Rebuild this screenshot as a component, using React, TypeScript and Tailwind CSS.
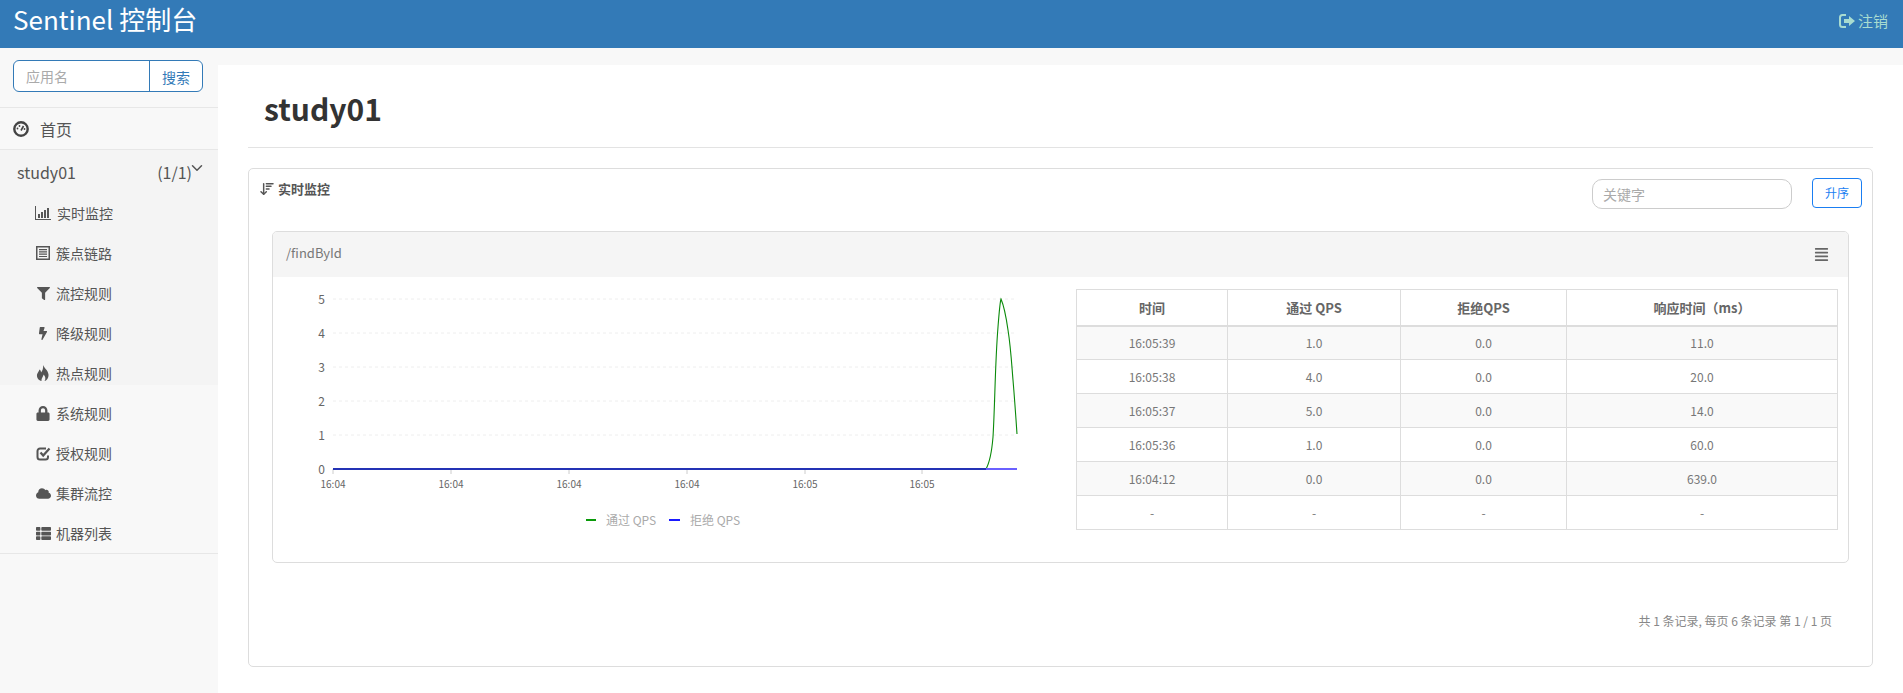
import { ArrowDownWideNarrow, ChevronDown } from 'lucide-react';
import { FaAlignJustify, FaBolt, FaCloud, FaFilter, FaLock, FaThList } from 'react-icons/fa';

const font = { fontFamily: '"Noto Sans CJK SC", "Noto Sans", sans-serif' };

const StatsIcon = () => (
  <svg viewBox="0 0 16 14" className="w-4 h-[14px]" fill="currentColor">
    <path d="M0 0h1v13h15v1H0z" />
    <path d="M3 8h2v4H3zM6 6h2v6H6zM9 4h2v8H9zM12 2h2v10h-2z" />
  </svg>
);

const ListAltIcon = () => (
  <svg viewBox="0 0 14 14" className="w-[14px] h-[14px]" fill="currentColor">
    <path d="M0 0h14v14H0zM1.500 1.500v11h11v-11z" fillRule="evenodd" />
    <path d="M3 3h8v1.200H3zM3 5.300h8v1.200H3zM3 7.600h8v1.200H3zM3 9.900h8v1.200H3z" />
  </svg>
);

const FireIcon = () => (
  <svg viewBox="0 0 14 16" className="w-[14px] h-4" fill="currentColor">
    <path d="M7 0c1 3 5 5 5.500 9.500C12.800 13 10.500 16 8.500 16c1.500-2 1-4.500-1-6.500 0 2-2 3-2 6.500C3 15.500.5 13 1 9.500c.5-2 2-3 2.500-5 1 .5 1.500 1.500 1.500 3C6.500 6 7.500 3 7 0z" />
  </svg>
);

const CheckIcon = () => (
  <svg viewBox="0 0 15 15" className="w-[15px] h-[15px]" fill="none" stroke="currentColor">
    <path d="M12 9.500V11a2.500 2.500 0 0 1-2.500 2.500H4A2.500 2.500 0 0 1 1.500 11V5A2.500 2.500 0 0 1 4 2.500h6" strokeWidth="2" />
    <path d="M4.500 6.500 7.200 9.500 13.500 2.500" strokeWidth="2.200" />
  </svg>
);

const DashboardIcon = () => (
  <svg viewBox="0 0 16 16" className="w-4 h-4 text-[#444]">
    <circle cx="8" cy="8" r="6.700" fill="none" stroke="currentColor" strokeWidth="2.400" />
    <path d="M8 9.500 10.500 5" stroke="currentColor" strokeWidth="1.600" />
    <circle cx="4.500" cy="7.500" r="0.9" fill="currentColor" />
    <circle cx="6.500" cy="5" r="0.9" fill="currentColor" />
    <circle cx="11.500" cy="8" r="0.9" fill="currentColor" />
  </svg>
);

const LogoutIcon = () => (
  <svg viewBox="0 0 16 14" className="w-4 h-[14px]" fill="currentColor">
    <path d="M7 0H3.500A3.500 3.500 0 0 0 0 3.500v7A3.500 3.500 0 0 0 3.500 14H7v-2H3.500A1.500 1.500 0 0 1 2 10.500v-7A1.500 1.500 0 0 1 3.500 2H7z" />
    <path d="M5 5h5V2l6 5-6 5V9H5z" />
  </svg>
);

const menu = [
  { label: '实时监控', icon: <StatsIcon />, gap: 'gap-[6px]' },
  { label: '簇点链路', icon: <ListAltIcon />, gap: 'gap-[5px]' },
  { label: '流控规则', icon: <FaFilter className="w-[13px] h-[13px]" />, gap: 'gap-[5px]' },
  { label: '降级规则', icon: <FaBolt className="w-3 h-[13px]" />, gap: 'gap-[5px]' },
  { label: '热点规则', icon: <FireIcon />, gap: 'gap-[5px]' },
];

const menuTail = [
  { label: '系统规则', icon: <FaLock className="w-[14px] h-[15px]" />, gap: 'gap-[5px]' },
  { label: '授权规则', icon: <CheckIcon />, gap: 'gap-[5px]' },
  { label: '集群流控', icon: <FaCloud className="w-[15px] h-[15px]" />, gap: 'gap-[5px]' },
  { label: '机器列表', icon: <FaThList className="w-[15px] h-[15px]" />, gap: 'gap-[5px]' },
];

const rows = [
  ['16:05:39', '1.0', '0.0', '11.0'],
  ['16:05:38', '4.0', '0.0', '20.0'],
  ['16:05:37', '5.0', '0.0', '14.0'],
  ['16:05:36', '1.0', '0.0', '60.0'],
  ['16:04:12', '0.0', '0.0', '639.0'],
  ['-', '-', '-', '-'],
];

const colWidths = ['w-[151px]', 'w-[173px]', 'w-[166px]', 'w-[271px]'];
const ticks = [333, 451, 569, 687, 805, 922];
const tickLabels = ['16:04', '16:04', '16:04', '16:04', '16:05', '16:05'];

function MenuItem({ item }: { item: { label: string; icon: React.ReactNode; gap: string } }) {
  return (
    <li className={`h-10 pl-[35px] flex items-center text-sm text-[#555] ${item.gap}`}>
      <span className="w-4 flex justify-center shrink-0">{item.icon}</span>
      <span>{item.label}</span>
    </li>
  );
}

function Chart() {
  return (
    <svg viewBox="0 0 756 270" className="w-[756px] h-[270px] shrink-0">
      {[1, 2, 3, 4, 5].map((n) => (
        <line key={n} x1={49} x2={733} y1={185 - n * 34} y2={185 - n * 34} stroke="#eeeeee" strokeDasharray="3 3" />
      ))}
      {[0, 1, 2, 3, 4, 5].map((n) => (
        <text key={n} x={41} y={190 - n * 34} textAnchor="end" fontSize="12" fill="#666">{n}</text>
      ))}
      {ticks.map((x, i) => (
        <g key={i}>
          <line x1={x - 284} x2={x - 284} y1={185} y2={190} stroke="#ccc" />
          <text x={x - 284} y={204} textAnchor="middle" fontSize="10" fill="#666">{tickLabels[i]}</text>
        </g>
      ))}
      <path
        d="M702 185C706 178 708 165 709 153C711 120 711 80 714 43C715 30 716 18 717 15C720 22 722 32 724 46C727 65 728 85 729 96C731 120 732 135 733 150"
        fill="none"
        stroke="#0a8a0a"
        strokeWidth="1.100"
      />
      <line x1={49} x2={702} y1={185} y2={185} stroke="#2433b5" strokeWidth="2" />
      <line x1={702} x2={733} y1={185} y2={185} stroke="#6a60ff" strokeWidth="2" />
      <line x1={302} x2={312} y1={236} y2={236} stroke="#0a9a0a" strokeWidth="2" />
      <text x={322} y={241} fontSize="12" fill="#aaa">通过 QPS</text>
      <line x1={385} x2={396} y1={236} y2={236} stroke="#1a1aff" strokeWidth="2" />
      <text x={406} y={241} fontSize="12" fill="#aaa">拒绝 QPS</text>
    </svg>
  );
}

export default function App() {
  return (
    <div style={font} className="w-[1903px] h-[693px] overflow-hidden bg-white text-[#333] flex flex-col">
      {/* Header */}
      <header className="h-12 shrink-0 bg-[#337ab7] flex items-center justify-between pl-[13px] pr-[15px]">
        <h1 className="text-[26px] text-white leading-[38px] mb-[10px]">Sentinel 控制台</h1>
        <a className="flex items-center gap-[3px] text-[15px] text-[#a9dcd0] -mt-[6px]">
          <LogoutIcon />
          <span>注销</span>
        </a>
      </header>

      <div className="flex flex-1 min-h-0">
        {/* Sidebar */}
        <aside className="w-[218px] shrink-0 bg-[#f8f8f8]">
          <div className="h-[60px] pt-3 px-[13px] border-b border-[#e7e7e7]">
            <div className="flex h-[32px] w-[190px] border border-[#337ab7] rounded-md bg-white overflow-hidden text-sm">
              <div className="flex-1 pl-[12px] text-[#aaa] leading-[30px]">应用名</div>
              <div className="w-[53px] border-l border-[#337ab7] text-center text-[#337ab7] leading-[32px]">搜索</div>
            </div>
          </div>
          <div className="h-[42px] pl-[13px] flex items-center gap-[11px] text-base text-[#555] border-b border-[#e7e7e7]">
            <DashboardIcon />
            <span>首页</span>
          </div>
          <div className="bg-[#f4f4f4] h-[235px]">
            <div className="h-[43px] pl-[17px] pr-[14px] pt-[10px] flex items-start justify-between text-base text-[#555] relative">
              <span className="leading-6">study01</span>
              <span className="leading-6 pr-[12px]">(1/1)</span>
              <ChevronDown className="absolute right-[12px] top-[9px] w-[18px] h-[18px]" strokeWidth={2} />
            </div>
            <ul>
              {menu.map((item) => (
                <MenuItem key={item.label} item={item} />
              ))}
            </ul>
          </div>
          <ul className="border-b border-[#e7e7e7] pt-2">
            {menuTail.map((item) => (
              <MenuItem key={item.label} item={item} />
            ))}
          </ul>
        </aside>

        {/* Main */}
        <main className="flex-1 min-w-0 bg-[#f8f8f8] pt-[17px]">
          <div className="bg-white h-full px-[30px]">
            <div className="h-[83px] border-b border-[#e3e3e3] pl-[16px] pt-[18px]">
              <h2 className="text-[30px] font-bold leading-[50px] text-[#333]">study01</h2>
            </div>

            <section className="mt-5 h-[499px] border border-[#ddd] rounded-[5px] flex flex-col">
              <div className="h-[62px] flex items-start justify-between shrink-0 pl-[10px] pr-[10px]">
                <div className="flex items-center gap-[3px] mt-[10px] text-[13px] font-bold text-[#555]">
                  <ArrowDownWideNarrow className="w-4 h-4" strokeWidth={2.2} />
                  <span>实时监控</span>
                </div>
                <div className="flex items-start gap-5 mt-[9px]">
                  <div className="w-[200px] h-[30px] mt-px border border-[#ccc] rounded-[10px] pl-[10px] text-sm leading-[28px] text-[#aaa]">关键字</div>
                  <button className="w-[50px] h-[30px] border border-[#1a7ef2] rounded-[4px] text-xs text-[#1a7ef2] bg-white">升序</button>
                </div>
              </div>

              <div className="mx-[23px] h-[332px] border border-[#ddd] rounded-[5px] overflow-hidden">
                <div className="h-[45px] bg-[#f5f5f5] flex items-center justify-between pl-[13px] pr-[19px] pb-[4px] text-[13px] text-[#777]">
                  <span>/findById</span>
                  <FaAlignJustify className="w-[15px] h-[15px] text-[#666] mt-[4px]" />
                </div>
                <div className="flex items-start pt-[12px] pl-[11px]">
                  <div className="-mt-[5px]">
                    <Chart />
                  </div>
                  <table className="w-[761px] border-collapse table-fixed text-xs text-[#777] ml-[36px]">
                    <thead>
                      <tr className="h-[36px]">
                        {['时间', '通过 QPS', '拒绝QPS', '响应时间（ms）'].map((h, i) => (
                          <th key={h} className={`border border-b-2 border-[#ddd] text-[13px] font-bold text-[#666] ${colWidths[i]}`}>{h}</th>
                        ))}
                      </tr>
                    </thead>
                    <tbody>
                      {rows.map((row, r) => (
                        <tr key={r} className={`h-[34px] ${r % 2 === 0 ? 'bg-[#f9f9f9]' : 'bg-white'}`}>
                          {row.map((c, i) => (
                            <td key={i} className="border border-[#ddd] text-center">{c}</td>
                          ))}
                        </tr>
                      ))}
                    </tbody>
                  </table>
                </div>
              </div>

              <p className="mt-[50px] text-right pr-[40px] text-xs text-[#888]">共 1 条记录, 每页 6 条记录 第 1 / 1 页</p>
            </section>
          </div>
        </main>
      </div>
    </div>
  );
}
